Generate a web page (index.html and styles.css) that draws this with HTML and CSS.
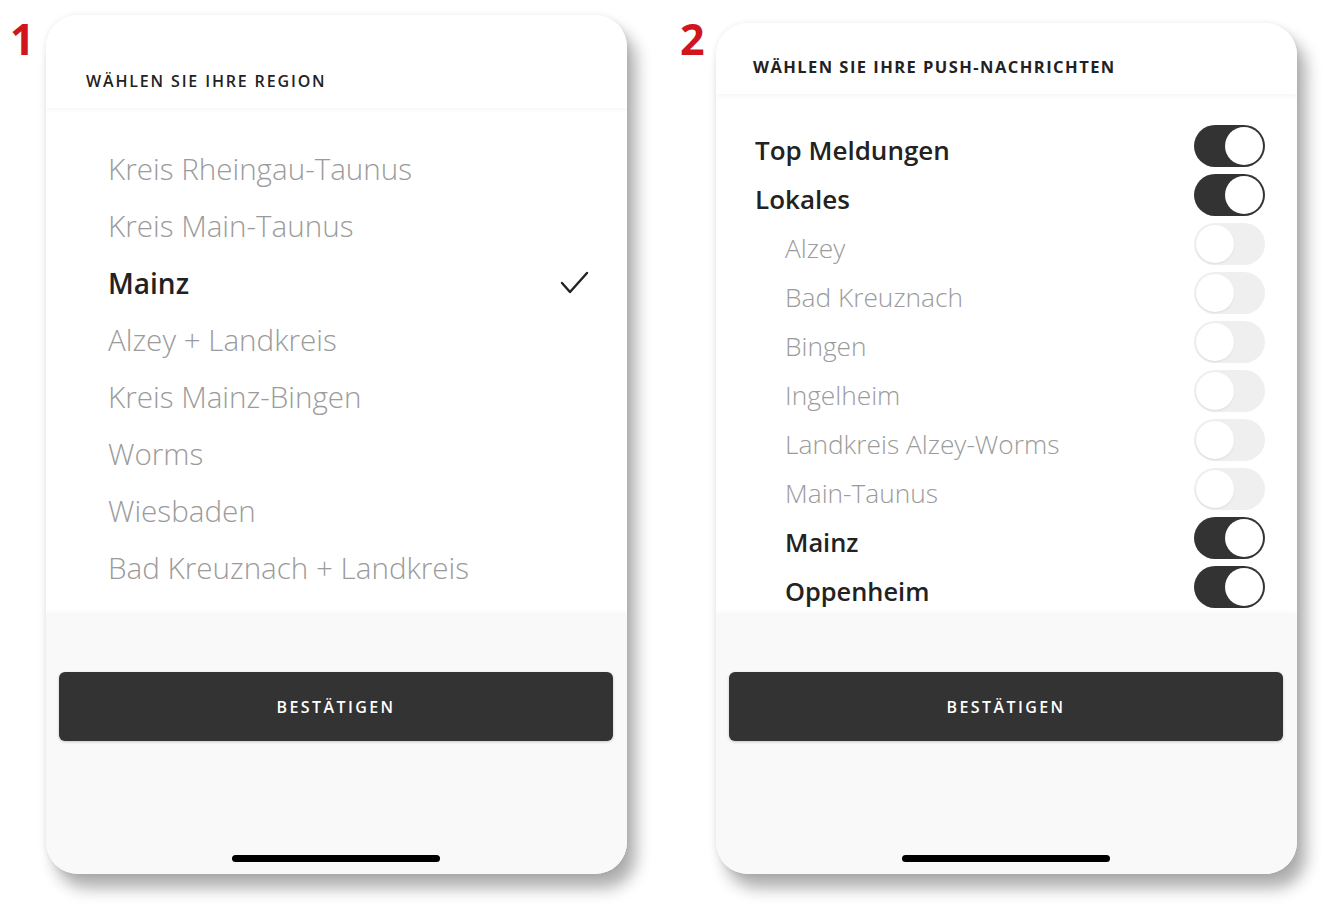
FILE: index.html
```html
<!DOCTYPE html>
<html lang="de">
<head>
<meta charset="utf-8">
<title>Region &amp; Push</title>
<link rel="stylesheet" href="styles.css">
</head>
<body>
<div class="stage">
  <section class="slot slot-1">
    <div class="num">1</div>
    <div class="phone phone-1">
      <header class="head head-1"><h2>WÄHLEN SIE IHRE REGION</h2></header>
      <ul class="regions">
        <li class="region">Kreis Rheingau-Taunus</li>
        <li class="region">Kreis Main-Taunus</li>
        <li class="region active">Mainz
          <svg class="check" width="30" height="24" viewBox="0 0 30 24"><polyline points="2,12 10,21 27,2" fill="none" stroke="#222" stroke-width="2.4" stroke-linecap="round" stroke-linejoin="round"/></svg>
        </li>
        <li class="region">Alzey + Landkreis</li>
        <li class="region">Kreis Mainz-Bingen</li>
        <li class="region">Worms</li>
        <li class="region">Wiesbaden</li>
        <li class="region">Bad Kreuznach + Landkreis</li>
      </ul>
      <footer class="foot">
        <button class="btn">BESTÄTIGEN</button>
        <div class="home"></div>
      </footer>
    </div>
  </section>

  <section class="slot slot-2">
    <div class="num">2</div>
    <div class="phone phone-2">
      <header class="head head-2"><h2>WÄHLEN SIE IHRE PUSH-NACHRICHTEN</h2></header>
      <ul class="pushes">
        <li class="push main on"><span>Top Meldungen</span><i class="tgl"></i></li>
        <li class="push main on"><span>Lokales</span><i class="tgl"></i></li>
        <li class="push sub"><span>Alzey</span><i class="tgl"></i></li>
        <li class="push sub"><span>Bad Kreuznach</span><i class="tgl"></i></li>
        <li class="push sub"><span>Bingen</span><i class="tgl"></i></li>
        <li class="push sub"><span>Ingelheim</span><i class="tgl"></i></li>
        <li class="push sub"><span>Landkreis Alzey-Worms</span><i class="tgl"></i></li>
        <li class="push sub"><span>Main-Taunus</span><i class="tgl"></i></li>
        <li class="push sub on"><span>Mainz</span><i class="tgl"></i></li>
        <li class="push sub on"><span>Oppenheim</span><i class="tgl"></i></li>
      </ul>
      <footer class="foot">
        <button class="btn">BESTÄTIGEN</button>
        <div class="home"></div>
      </footer>
    </div>
  </section>
</div>
</body>
</html>
```
FILE: styles.css
```css
* { box-sizing: border-box; }
html, body { margin: 0; padding: 0; background: #fff; }
body {
  width: 1329px;
  height: 915px;
  overflow: hidden;
  font-family: "Open Sans", "Liberation Sans", sans-serif;
  color: #222;
}
.stage {
  display: flex;
  gap: 53px;
  padding-left: 10px;
}
.slot { display: flex; align-items: flex-start; }
.num {
  width: 36px;
  margin-top: 14px;
  font-family: "Open Sans", "Liberation Sans", sans-serif;
  font-weight: 700;
  font-size: 43px;
  line-height: 50px;
  color: #d0161c;
}
.phone {
  width: 581px;
  border-radius: 32px;
  background: #fff;
  overflow: hidden;
  display: flex;
  flex-direction: column;
  box-shadow: 0 0 6px rgba(0,0,0,0.08), 9px 14px 16px rgba(0,0,0,0.32);
}
.phone-1 { margin-top: 15px; height: 859px; }
.phone-2 { margin-top: 23px; height: 851px; }

.head {
  background: #fff;
  position: relative;
  z-index: 1;
  box-shadow: 0 2px 4px rgba(0,0,0,0.04);
}
.head h2 {
  margin: 0;
  color: #222;
}
.head-1 { height: 93px; padding: 57px 0 0 40px; }
.head-1 h2 { font-weight: 600; line-height: 18px; font-size: 16px; letter-spacing: 1.85px; }
.head-2 { height: 71px; padding: 35px 0 0 37px; }
.head-2 h2 { font-weight: 700; line-height: 18px; font-size: 16.5px; letter-spacing: 1.45px; }

ul { list-style: none; margin: 0; padding: 0; }

.regions {
  flex: 1;
  padding: 32px 39px 0 62px;
}
.region {
  height: 57px;
  display: flex;
  align-items: center;
  justify-content: space-between;
  font-weight: 300;
  font-size: 29.6px;
  color: #9b9b9b;
}
.region.active { font-weight: 600; color: #222; font-size: 28px; }
.check { margin-right: -2px; }

.pushes {
  flex: 1;
  padding: 27px 32px 0 39px;
}
.push {
  height: 49px;
  display: flex;
  align-items: center;
  justify-content: space-between;
}
.push span { margin-top: 8px; }
.push.main { font-weight: 600; color: #222; font-size: 26px; }
.push.sub { padding-left: 30px; font-weight: 300; color: #9b9b9b; font-size: 26.3px; }
.push.sub.on { font-weight: 600; color: #222; font-size: 25.4px; }

.tgl {
  width: 71px;
  height: 42px;
  border-radius: 21px;
  background: #ececec;
  position: relative;
  display: block;
  flex: none;
}
.tgl::after {
  content: "";
  position: absolute;
  top: 2px;
  left: 2px;
  width: 38px;
  height: 38px;
  border-radius: 50%;
  background: #fff;
  box-shadow: 0 1px 2px rgba(0,0,0,0.1);
}
.push.sub:not(.on) .tgl { opacity: 0.8; }
.push.on .tgl { background: #333; }
.push.on .tgl::after { left: 31px; top: 2px; box-shadow: none; }

.foot {
  height: 260px;
  flex: none;
  background: #f9f9f9;
  display: flex;
  flex-direction: column;
  align-items: center;
  padding: 58px 14px 12px 13px;
  box-shadow: 0 -2px 4px rgba(0,0,0,0.03);
}
.btn {
  width: 100%;
  height: 69px;
  border: 0;
  border-radius: 6px;
  background: #333;
  color: #fff;
  font-family: "Open Sans", "Liberation Sans", sans-serif;
  font-weight: 600;
  font-size: 16px;
  letter-spacing: 2.4px;
  box-shadow: 0 1px 3px rgba(0,0,0,0.2);
}
.home {
  margin-top: auto;
  width: 208px;
  height: 7px;
  border-radius: 4px;
  background: #000;
}
```
